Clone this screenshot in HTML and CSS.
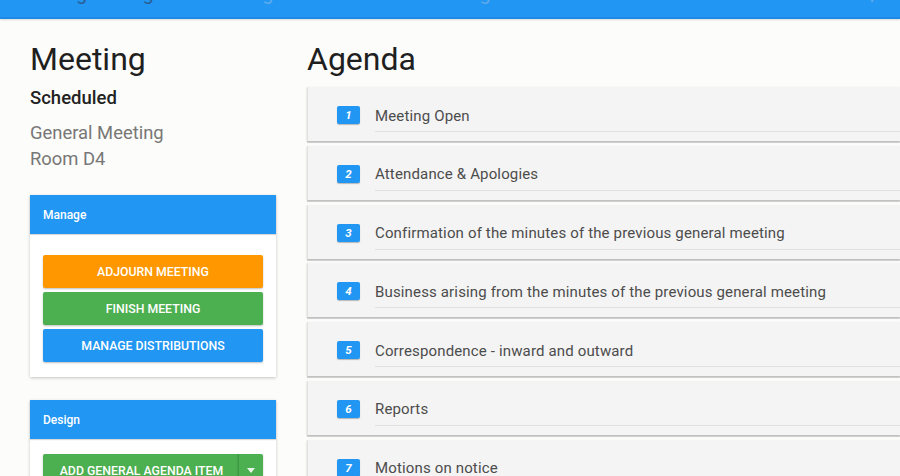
FILE: index.html
```html
<!DOCTYPE html>
<html lang="en">
<head>
<meta charset="utf-8">
<title>Meeting</title>
<link rel="stylesheet" href="styles.css">
</head>
<body>
<header class="topbar">
  <span class="brand">Meeting Manager</span>
  <span class="crumb">Meetings list</span>
  <span class="crumb">General Meeting</span>
  <span class="menu">⋮</span>
</header>
<main class="layout">
  <aside class="side">
    <h1 class="title">Meeting</h1>
    <div class="status">Scheduled</div>
    <div class="meta">General Meeting</div>
    <div class="meta">Room D4</div>

    <section class="panel">
      <div class="panel-head">Manage</div>
      <div class="panel-body">
        <button class="btn btn-orange">Adjourn Meeting</button>
        <button class="btn btn-green">Finish Meeting</button>
        <button class="btn btn-blue">Manage Distributions</button>
      </div>
    </section>

    <section class="panel">
      <div class="panel-head">Design</div>
      <div class="panel-body panel-body-tight">
        <div class="split">
          <button class="btn btn-green split-main">Add General Agenda Item</button>
          <button class="btn btn-green split-caret"><svg width="8" height="5" viewBox="0 0 8 5"><path d="M0 0h8L4 5z" fill="#e8f5e9"/></svg></button>
        </div>
      </div>
    </section>
  </aside>

  <section class="agenda">
    <h1 class="title">Agenda</h1>
    <ol class="items">
      <li class="item"><span class="num">1</span><span class="label">Meeting Open</span></li>
      <li class="item"><span class="num">2</span><span class="label">Attendance &amp; Apologies</span></li>
      <li class="item"><span class="num">3</span><span class="label">Confirmation of the minutes of the previous general meeting</span></li>
      <li class="item"><span class="num">4</span><span class="label">Business arising from the minutes of the previous general meeting</span></li>
      <li class="item"><span class="num">5</span><span class="label">Correspondence - inward and outward</span></li>
      <li class="item"><span class="num">6</span><span class="label">Reports</span></li>
      <li class="item"><span class="num">7</span><span class="label">Motions on notice</span></li>
    </ol>
  </section>
</main>
</body>
</html>
```

FILE: styles.css
```css
* { box-sizing: border-box; }
html, body {
  margin: 0;
  padding: 0;
  background: #fcfcfa;
  font-family: Roboto, "Liberation Sans", Arial, sans-serif;
  overflow: hidden;
  height: 476px;
}

.topbar {
  height: 19px;
  background: #2196f3;
  border-bottom: 2px solid #1e88e5;
  box-shadow: 0 1px 2px rgba(0,0,0,0.15);
  display: flex;
  align-items: flex-start;
  overflow: hidden;
  padding-left: 15px;
  gap: 30px;
}
.topbar span {
  font-size: 20px;
  line-height: 20px;
  margin-top: -17px;
  white-space: nowrap;
}
.brand { color: #2a5f93; }
.crumb { color: #5eaaea; }
.menu { margin-left: auto; margin-right: 18px; color: #5eaaea; }

.layout {
  display: flex;
  gap: 31px;
  padding: 22px 0 0 30px;
}

.side {
  width: 246px;
  flex: none;
}

.title {
  margin: 0;
  font-size: 32px;
  line-height: 36px;
  font-weight: 400;
  color: #1f1f1f;
}

.status {
  margin-top: 9px;
  font-size: 18.5px;
  line-height: 25px;
  font-weight: 500;
  color: #222;
}
.meta {
  font-size: 18.4px;
  line-height: 26px;
  color: #777;
}
.status + .meta { margin-top: 9px; }

.panel {
  margin-top: 23px;
  background: #fff;
  box-shadow: 0 1px 3px rgba(0,0,0,0.22);
}
.panel-head {
  height: 39px;
  background: #2196f3;
  color: #fff;
  font-size: 12px;
  font-weight: 500;
  padding-left: 13px;
  display: flex;
  align-items: center;
  box-shadow: 0 1px 1px rgba(0,0,0,0.15);
}
.panel-body {
  padding: 21px 13px 15px;
  display: flex;
  flex-direction: column;
  gap: 4px;
}
.panel-body-tight { padding-top: 15px; }

.btn {
  height: 33px;
  border: 0;
  border-radius: 2px;
  color: #fff;
  font-family: Roboto, "Liberation Sans", Arial, sans-serif;
  font-size: 12.3px;
  font-weight: 500;
  text-transform: uppercase;
  box-shadow: 0 1px 2px rgba(0,0,0,0.25);
  padding: 0;
}
.btn-orange { background: #ff9800; }
.btn-green { background: #4caf50; }
.btn-blue { background: #2196f3; }

.split { display: flex; }
.split-main {
  flex: 1;
  border-radius: 2px 0 0 2px;
  padding-left: 2px;
}
.split-caret {
  width: 25px;
  border-left: 1px solid #3d9941;
  border-radius: 0 2px 2px 0;
  display: flex;
  align-items: center;
  justify-content: center;
}

.agenda {
  flex: 1;
  min-width: 0;
}
.items {
  list-style: none;
  margin: 10px 0 0;
  padding: 0;
  display: flex;
  flex-direction: column;
  gap: 4.8px;
}
.item {
  height: 54px;
  background: #f4f4f4;
  border-left: 1px solid #e2e2e2;
  box-shadow: 0 1px 2px rgba(0,0,0,0.2), 0 2px 0 #dedede;
  display: flex;
  align-items: flex-start;
  padding: 18px 0 0 29px;
}
.num {
  flex: none;
  width: 23px;
  height: 18px;
  background: #2196f3;
  border-radius: 2px;
  color: #fff;
  font-size: 11.5px;
  font-weight: 700;
  font-style: italic;
  line-height: 18px;
  text-align: center;
  box-shadow: 0 1px 1px rgba(0,0,0,0.25);
  margin-right: 15px;
  margin-top: 1px;
}
.label {
  flex: 1;
  margin-top: 1.5px;
  font-size: 15px;
  line-height: 19px;
  color: #4c4c4c;
  padding-bottom: 5.5px;
  border-bottom: 1px solid #e0e0e0;
  letter-spacing: 0.15px;
  white-space: nowrap;
}
```
